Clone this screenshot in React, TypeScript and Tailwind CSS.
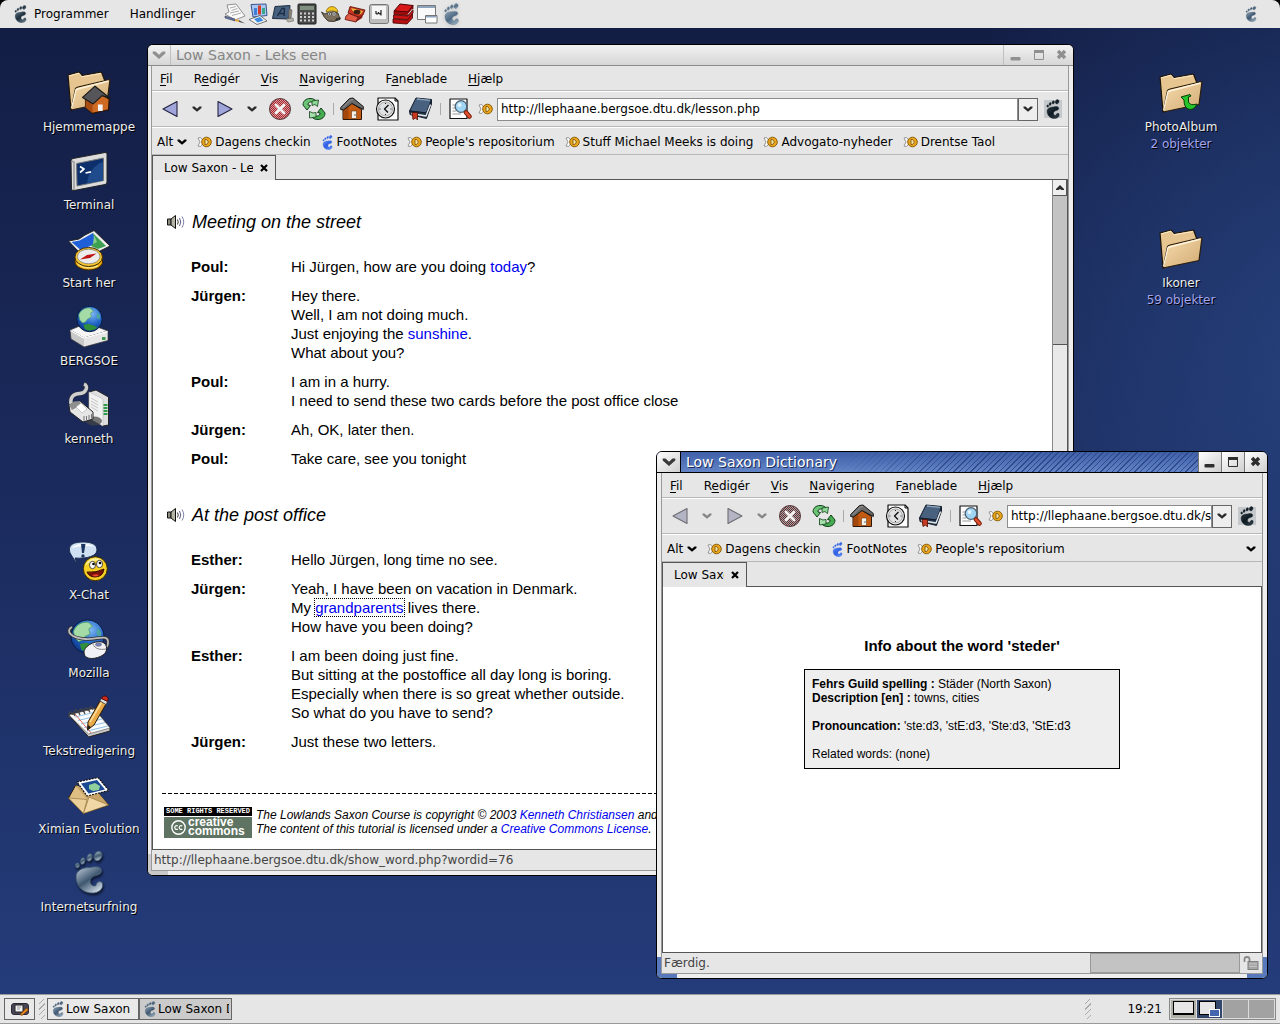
import React, { useId } from "react";
import type { ReactNode } from "react";

type IconProps = { className?: string };

/* ---------- shared drawings ---------- */

function Foot({ className, light = "#b4c6d4", dark = "#1f3a58" }: IconProps & { light?: string; dark?: string }) {
  const id = useId();
  return (
    <svg viewBox="0 0 30 44" className={className} aria-hidden="true">
      <defs>
        <linearGradient id={id} x1="0" y1="0" x2="0.7" y2="1">
          <stop offset="0" stopColor={light} />
          <stop offset="0.55" stopColor={dark} />
          <stop offset="1" stopColor={light} />
        </linearGradient>
      </defs>
      <g fill={`url(#${id})`} stroke={dark} strokeWidth="0.8">
        <ellipse cx="24" cy="6" rx="3.8" ry="5" transform="rotate(25 24 6)" />
        <ellipse cx="15.5" cy="7.5" rx="2.5" ry="3.8" transform="rotate(18 15.5 7.5)" />
        <ellipse cx="8.7" cy="11" rx="2.2" ry="3.3" transform="rotate(14 8.7 11)" />
        <ellipse cx="3.4" cy="15.4" rx="2" ry="2.5" transform="rotate(10 3.4 15.4)" />
        <path d="M2 27C2 20 9 17.500 16 17.500C23 16 28 16.500 27.500 21.500C26.500 26.500 18.500 24.500 16.500 29.500C15 34.500 19.500 37 22 35.500C22 32 26 30.500 28 32.500C30 37 27 42 20 43C9 44 2 36 2 27Z" />
      </g>
    </svg>
  );
}

function Chevron({ className }: IconProps) {
  return (
    <svg viewBox="0 0 10 8" className={className ?? "h-2 w-2.5"} aria-hidden="true">
      <path d="M0.500 1.500H2.500L5 3.800L7.500 1.500H9.500V3L5 6.800L0.500 3Z" fill="currentColor" />
    </svg>
  );
}

function House() {
  return (
    <g strokeLinejoin="round">
      <path d="M3 11L11.500 6L21.500 12.500V22.500H3Z" fill="#c25a12" stroke="#2a1608" />
      <path d="M3.500 11.500L8.500 8.500V22H3.500Z" fill="#a3470b" />
      <path d="M0.700 10.500L9.500 1.500L13 1L23.300 9.500V12.500L12 6.500L3.500 13L0.700 12.500Z" fill="#6a6a6a" stroke="#161616" />
      <path d="M3 10.500L10.500 3L13 2.500" fill="none" stroke="#9a9a9a" />
      <rect x="11.500" y="14" width="5" height="7.500" fill="#f4f1ea" stroke="#6a3a10" strokeWidth="0.600" />
      <circle cx="15" cy="18" r="0.700" fill="#333" />
    </g>
  );
}

function Folder({ dy = 0, children }: { dy?: number; children?: ReactNode }) {
  const id = useId();
  return (
    <svg viewBox="0 0 44 44" className="size-11 overflow-visible" aria-hidden="true">
      <defs>
        <linearGradient id={id} x1="0" y1="0" x2="1" y2="1">
          <stop offset="0" stopColor="#f6dcae" />
          <stop offset="1" stopColor="#d2aa72" />
        </linearGradient>
      </defs>
      <g transform={`translate(0 ${dy})`} strokeLinejoin="round">
        <path d="M1 4L12 1L15 4.500L34.500 1L37.500 9L38 20L4 39Z" fill="#e6c590" stroke="#1c1408" strokeWidth="1.2" />
        <path d="M2 5L12 2.200L15 5.800L34 2.500" fill="none" stroke="#fbe9c6" />
        <path d="M8.500 17.500Q9 16.500 11 16L43 8.500L40 31.500L4 39Z" fill={`url(#${id})`} stroke="#2a1d0b" strokeWidth="1.2" />
        <path d="M4.500 37.500L9 18.500L41.500 10" fill="none" stroke="#fff4dc" strokeWidth="1.3" />
        {children}
      </g>
    </svg>
  );
}

function Globe({ cx, cy, r }: { cx: number; cy: number; r: number }) {
  const id = useId();
  return (
    <g>
      <defs>
        <radialGradient id={id} cx="0.6" cy="0.3" r="0.8">
          <stop offset="0" stopColor="#7fb8f4" />
          <stop offset="0.5" stopColor="#2166c8" />
          <stop offset="1" stopColor="#0a2c7a" />
        </radialGradient>
      </defs>
      <circle cx={cx} cy={cy} r={r} fill={`url(#${id})`} stroke="#081a40" />
      <g transform={`translate(${cx} ${cy}) scale(${r / 13})`}>
        <path d="M-11 -4C-9 -10 -3 -12 1 -11L4 -8L1 -6L2 -2L-2 0L-4 3L-7 4L-10 1Z" fill="#a5dba6" stroke="#4f9e62" strokeWidth="0.6" />
        <path d="M-6 6L-1 5L5 7L8 9C4 12 -2 13 -5 10Z" fill="#2f8f3a" />
        <path d="M8 -7L11 -3L10 1L7 -2Z" fill="#4ea5a0" />
      </g>
    </g>
  );
}

/* ---------- desktop icons ---------- */

function Pic({ children }: { children: ReactNode }) {
  return (
    <svg viewBox="0 0 44 44" className="size-11 overflow-visible" aria-hidden="true" strokeLinejoin="round">
      {children}
    </svg>
  );
}

const HomeFolder = () => (
  <Folder>
    <g transform="translate(15 14) scale(1.18)">
      <path d="M3 11L12 4L23 12L22.500 21L9 24L3 19Z" fill="#cf6a22" stroke="#2c1404" />
      <path d="M3 11L9 14V24L3 19Z" fill="#a94c12" />
      <path d="M0.500 10.500L11 1L24 11.500L17 9L9.500 16Z" fill="#56565a" stroke="#1a1a1a" />
      <rect x="13.500" y="16.500" width="4" height="5.500" fill="#f4f4f4" />
    </g>
  </Folder>
);

const Terminal = () => (
  <Pic>
    <path d="M4 12Q4 10 6 9.500L38 3.500Q40 3 40 5V33Q40 35 38 35.500L7 41.500Q5 42 4.500 40Z" fill="#dcdcdc" stroke="#222" />
    <path d="M4.500 12L7 13V41" fill="none" stroke="#9a9a9a" strokeWidth="1.500" />
    <path d="M9.500 14.500L36.500 9V31.500L10 37Z" fill="#0d2f6b" stroke="#777" />
    <path d="M20 34.500C21 24 27 16 36 13V31.500Z" fill="#1f4a8c" />
    <path d="M13 17.500L17 20L13 23.500" fill="none" stroke="#fff" strokeWidth="1.700" />
    <path d="M18.500 24L24 22.800" stroke="#fff" strokeWidth="1.700" />
  </Pic>
);

const StartHere = () => (
  <Pic>
    <path d="M1.500 14L12 12L18 8L27 3.500L43 19L31 25L22 22L12 25Z" fill="#eee" stroke="#222" />
    <path d="M4.500 15L12.500 13.500L19 10L26 6L30 16L21 20L13 22.500Z" fill="#1f5fd8" />
    <path d="M26 6L39 19L31 22L24 19L28 14Z" fill="#3ea152" />
    <path d="M27 8L30 15L26 17Z" fill="#88cc8c" />
    <path d="M8 30V35C8 39 14 43 21.700 43S35.500 39 35.500 35V30Z" fill="#e9a80e" stroke="#3a2602" />
    <path d="M11 37C17 41.500 26 41.500 31 38.500" stroke="#fbe27a" strokeWidth="1.800" fill="none" />
    <ellipse cx="21.700" cy="30" rx="13.800" ry="9.500" fill="#f4c630" stroke="#3a2602" />
    <ellipse cx="21.700" cy="29.500" rx="11.300" ry="7.300" fill="#ececec" stroke="#777" strokeWidth="0.700" />
    <path d="M13 32.500L20 28L29.500 26.500L23 31Z" fill="#c01414" />
  </Pic>
);

const Bergsoe = () => (
  <Pic>
    <path d="M3 25L20 18L41 26L17 33Z" fill="#f6f6f6" stroke="#333" strokeWidth="0.700" />
    <path d="M3 25L17 33V42L4 34Z" fill="#c9c9c9" />
    <path d="M17 33L41 26V35.500L17 42Z" fill="#e6e6e6" />
    <path d="M3 25L17 33L41 26V35.500L17 42L4 34Z" fill="none" stroke="#333" strokeWidth="0.700" />
    <path d="M3.500 25.500L17 33.200L40.500 26.500" fill="none" stroke="#fff" strokeWidth="1.400" />
    <rect x="35" y="32" width="3.500" height="3" fill="#3a9a50" />
    <Globe cx={22.500} cy={14} r={12.700} />
  </Pic>
);

const Kenneth = () => (
  <Pic>
    <path d="M17 1C22 3 19 10 13 10.500C6 11 3 14 4 21" fill="none" stroke="#333" strokeWidth="4.600" />
    <path d="M17 1C22 3 19 10 13 10.500C6 11 3 14 4 21" fill="none" stroke="#cfcfcf" strokeWidth="3.400" />
    <path d="M22 9L29 7L41.500 14V42L36 43L22 35Z" fill="#dedede" stroke="#222" />
    <path d="M22 9L36 16V43L22 35Z" fill="#f1f1f1" stroke="#bbb" strokeWidth="0.600" />
    <path d="M24 15L31 19M24 18L31 22M24 21L31 25M24 24L31 28" stroke="#bbb" strokeWidth="0.800" />
    <path d="M38.500 21V33" stroke="#2f9a48" strokeWidth="4" strokeDasharray="2 1" />
    <ellipse cx="27" cy="38" rx="8" ry="4.500" fill="#444" opacity="0.700" />
    <path d="M2 22L13 18L26 29V36L16 39L3 29Z" fill="#e6e6e6" stroke="#222" />
    <path d="M2 22L7 18.500L13 18L14 22L5 27Z" fill="#8f8f8f" />
    <path d="M9 24L14 20L20 26L15 30Z" fill="#fff" stroke="#aaa" strokeWidth="0.600" />
    <path d="M17 33V38M19.500 33V37M22 32V36.500M24.500 31V35.500" stroke="#777" />
  </Pic>
);

const XChat = () => (
  <Pic>
    <path d="M8 19L10.500 26L3 14C0 5 8 3 16 3S30 5 30 11S20 20 8 19Z" fill="#cfe0f3" stroke="#1a2c50" />
    <path d="M5 9C8 4 24 4 27 8C22 6 10 7 5 9Z" fill="#fff" />
    <path d="M14 5H18.500L17 14H15Z" fill="#1c3560" />
    <circle cx="16" cy="17" r="1.700" fill="#1c3560" />
    <circle cx="28.300" cy="29.700" r="12" fill="#f6cf24" stroke="#3c2b00" />
    <path d="M18 27A11 11 0 0 1 36 22A16 12 0 0 0 18 27Z" fill="#fdf09a" />
    <ellipse cx="25.500" cy="26" rx="3" ry="3.700" fill="#fff" stroke="#222" strokeWidth="0.800" />
    <ellipse cx="32.500" cy="25" rx="3" ry="3.700" fill="#fff" stroke="#222" strokeWidth="0.800" />
    <circle cx="26.500" cy="25" r="1.300" />
    <circle cx="33" cy="24" r="1.300" />
    <path d="M20 33Q29 34 37 30Q36 38 28 38Q22 38 20 33Z" fill="#7a1008" stroke="#200" strokeWidth="0.800" />
    <path d="M25 36.800Q29 34 32 36.500Q29 38.500 25 36.800Z" fill="#e8442e" />
  </Pic>
);

const Mozilla = () => (
  <Pic>
    <Globe cx={20.500} cy={19.500} r={16.500} />
    <path d="M5 10C-2 14 4 21 18 22C30 23 42 16 41 26C41 29 39 31 37 31" fill="none" stroke="#333" strokeWidth="3.400" />
    <path d="M5 10C-2 14 4 21 18 22C30 23 42 16 41 26C41 29 39 31 37 31" fill="none" stroke="#bdbdbd" strokeWidth="1.800" />
    <path d="M17 36C16 30 27 23 35 25C41 27 41 35 36 38C30 42 18 44 17 36Z" fill="#f2f2f6" stroke="#222" />
    <path d="M26 27C28 32 33 33 39 32" fill="none" stroke="#888" />
    <ellipse cx="31.500" cy="27.500" rx="3" ry="1.700" fill="#7f86c8" stroke="#444" strokeWidth="0.500" />
  </Pic>
);

const TextEdit = () => (
  <Pic>
    <path d="M1.500 20L27 13L43 33V36L21.500 42L20 40Z" fill="#c9c9c9" stroke="#222" />
    <path d="M2 20L27 13.500L43 33L21.500 39Z" fill="#fbfbfb" stroke="#555" strokeWidth="0.600" />
    <path d="M8 22L29 17M11 25.500L32 20.500M14 29L35 24M17 32.500L38 27.500M20 36L41 31" stroke="#8cc3ea" />
    <path d="M8 19L24 38" stroke="#e06a5a" />
    <path d="M3 23C0 18 5 14 6 20M8 21C5 16 10 12 11 18M13 20C10 15 15 11 16 17M18 19C15 14 20 10 21 16M23 17.500C20 13 25 9 26 15" fill="none" stroke="#444" strokeWidth="1.300" />
    <path d="M20.500 35L21 27L33 6L39 9L27 30Z" fill="#e9a948" stroke="#2a1a04" />
    <path d="M23 27L34.500 7.500" stroke="#fbdc96" strokeWidth="1.500" />
    <path d="M20.500 35L21 30L24 32Z" fill="#222" />
    <path d="M33 6L34.500 3.500L40.500 6.500L39 9.500Z" fill="#ddd" stroke="#444" strokeWidth="0.700" />
    <path d="M34.500 3.500C36 -1 43 1 40.500 6.500Z" fill="#cf2a1c" stroke="#3a0604" strokeWidth="0.800" />
  </Pic>
);

const Evolution = () => (
  <Pic>
    <path d="M1.500 25L8.500 12.500L28 16L41.500 32L16.500 40.500Z" fill="#e0bf85" stroke="#2a1d0a" />
    <path d="M8.500 12.500L28 16L41.500 32L20 26Z" fill="#c8a566" />
    <path d="M1.500 25L20 26.500L16.500 40.500Z" fill="#ecd09a" stroke="#8c6b34" strokeWidth="0.600" />
    <path d="M16.500 40.500L22 24L41.500 32Z" fill="#f0d7a5" stroke="#8c6b34" strokeWidth="0.600" />
    <path d="M10 9L31 4.500L42 17.500L20 23Z" fill="#fff" stroke="#111" strokeWidth="1.200" strokeDasharray="2 1" />
    <path d="M14 10.500L30 7L38 16.500L21.500 20.500Z" fill="#1b4a94" />
    <path d="M22 12L28 10L33 13L32 17L26 18L22 16Z" fill="#8fd09c" />
  </Pic>
);

const FootBig = () => (
  <span className="flex size-11 justify-center drop-shadow-[1px_2px_1px_rgba(0,0,0,0.6)]">
    <Foot className="-mt-px h-11 w-[30px]" light="#c5d2df" dark="#3f5870" />
  </span>
);

/* ---------- panel launchers (22 x 22) ---------- */

function Small({ children, className }: { children: ReactNode; className?: string }) {
  return (
    <svg viewBox="0 0 22 22" className={className ?? "size-[22px]"} aria-hidden="true" strokeLinejoin="round">
      {children}
    </svg>
  );
}

const launchers: { name: string; icon: ReactNode }[] = [
  {
    name: "Writer",
    icon: (
      <Small>
        <path d="M3 2L12 1L21 13L11 17L1 11L5 9Z" fill="#fafafa" stroke="#777" strokeWidth="0.800" />
        <path d="M6 5L12 3.500M7.500 7.500L13.500 5.500M6 10L15 8M8 12.500L17 10" stroke="#999" strokeWidth="0.800" />
        <path d="M1 13L11 16V18L1 15Z" fill="#5d74b0" stroke="#333" strokeWidth="0.500" />
        <path d="M11 16L15 17V19L11 18Z" fill="#e0a43c" />
        <path d="M15 17L21 20.500L15 19Z" fill="#555" />
      </Small>
    ),
  },
  {
    name: "Impress",
    icon: (
      <Small>
        <path d="M3 1.500L18 1L19 12.500L5 14Z" fill="#a9c6f0" stroke="#35558e" />
        <rect x="6" y="5" width="3" height="7" fill="#3f7fd8" />
        <rect x="10" y="2.500" width="3" height="9" fill="#d63a2c" />
        <rect x="14" y="5" width="3" height="6" fill="#3aa88a" />
        <path d="M1 16.500L12 12.500L19 18L9 21.500Z" fill="#f4f4f4" stroke="#555" strokeWidth="0.800" />
        <path d="M6 16L12 14L15.500 17.500L9.500 19.500Z" fill="#3b8be0" />
      </Small>
    ),
  },
  {
    name: "Draw",
    icon: (
      <Small>
        <path d="M3 3.500L18 2.500L17 16L0.500 15.500Z" fill="#46607f" stroke="#1e2c40" />
        <path d="M5.500 13L10 5.500H12.500L12 13M7.500 10.500H12" fill="none" stroke="#1b2b44" strokeWidth="1.300" />
        <path d="M17 6L20 7L19 15L16.500 15Z" fill="#8b8375" stroke="#555" strokeWidth="0.600" />
        <path d="M14 16L21 15L21.500 18L16 19Z" fill="#b8b3a8" stroke="#666" strokeWidth="0.600" />
      </Small>
    ),
  },
  {
    name: "Calculator",
    icon: (
      <Small>
        <rect x="2" y="1" width="18" height="20" rx="1" fill="#4a4a4a" stroke="#1c1c1c" />
        <rect x="4" y="3" width="14" height="4" fill="#7f8f80" />
        <path d="M4 10.500H18M4 14H18M4 17.500H18" stroke="#cfcfcf" strokeWidth="2" strokeDasharray="2 2" />
      </Small>
    ),
  },
  {
    name: "GIMP",
    icon: (
      <Small>
        <path d="M1.500 9L5 11Q12 7 18 10L20 16Q14 20 8 18Q4 15 1.500 9Z" fill="#7d715e" stroke="#2c241a" strokeWidth="0.800" />
        <path d="M6 9Q7 4 12 3.500Q17 4 18 9Q12 6.500 6 9Z" fill="#f2c51c" stroke="#7a5a00" strokeWidth="0.700" />
        <circle cx="9.500" cy="11" r="1.700" fill="#fff" stroke="#222" strokeWidth="0.500" />
        <circle cx="14" cy="11" r="1.900" fill="#fff" stroke="#222" strokeWidth="0.500" />
        <circle cx="9.500" cy="11" r="0.700" />
        <circle cx="14" cy="11" r="0.800" />
        <path d="M16 15L21 14.500L20 17L15 18Z" fill="#333" />
      </Small>
    ),
  },
  {
    name: "Eye of GNOME",
    icon: (
      <Small>
        <path d="M6 3.500L21 7L19 12L14 14L4 10Z" fill="#c8321e" stroke="#5a0c08" strokeWidth="0.800" />
        <path d="M7 5L19 8L17 11Q10 12 7 5Z" fill="#e7b63c" />
        <ellipse cx="13" cy="9" rx="3.500" ry="2.300" fill="#3a2010" />
        <path d="M2 13L5 10.500L14 14L12 19L1 16.500Z" fill="#e05a44" stroke="#5a0c08" strokeWidth="0.800" />
        <path d="M14 14L19 12L18 15L12 19Z" fill="#8a1a12" />
      </Small>
    ),
  },
  {
    name: "Keyboard",
    icon: (
      <Small>
        <rect x="1.500" y="1.500" width="19" height="19" rx="2" fill="#bdbdbd" stroke="#777" />
        <rect x="3.500" y="2.500" width="15" height="14" rx="1" fill="#f6f6f6" stroke="#aaa" strokeWidth="0.600" />
        <path d="M8 8V10.500Q10 12 10.500 9M10.500 9Q11 12 13 10V7M13 10V12.500" fill="none" stroke="#222" strokeWidth="1.200" />
      </Small>
    ),
  },
  {
    name: "Dictionary",
    icon: (
      <Small>
        <path d="M8 1L21 2.500L16 9L2 8Z" fill="#d81818" stroke="#4a0404" />
        <path d="M2 8L16 9L21 2.500V6L16 12.500L2 11.500Z" fill="#a00c0c" stroke="#4a0404" strokeWidth="0.700" />
        <path d="M1.500 12L16 13L21 7V10L16 16.500L1.500 15.500Z" fill="#d01414" stroke="#4a0404" strokeWidth="0.800" />
        <path d="M1 16L15 17L20.500 11V15L15 21L1 20Z" fill="#b81010" stroke="#4a0404" strokeWidth="0.800" />
        <path d="M16 11.500L20.500 6" stroke="#ddd" fill="none" />
      </Small>
    ),
  },
  {
    name: "Windows",
    icon: (
      <Small>
        <rect x="1.500" y="2.500" width="18" height="14" fill="#fafafa" stroke="#777" />
        <rect x="2" y="3" width="17" height="2" fill="#8da3bd" />
        <rect x="9.500" y="12.500" width="11.500" height="7.500" fill="#fff" stroke="#777" />
        <rect x="10" y="13" width="10.500" height="1.500" fill="#8da3bd" />
      </Small>
    ),
  },
  { name: "Epiphany", icon: <Foot className="h-[22px] w-[15px] drop-shadow-sm" light="#8fa6ba" dark="#4f6a84" /> },
];

/* ---------- toolbar icons ---------- */

function Tool({ children, size }: { children: ReactNode; size?: string }) {
  return (
    <svg viewBox="0 0 24 24" className={size ?? "size-6"} aria-hidden="true" strokeLinejoin="round">
      {children}
    </svg>
  );
}

const Arrow = ({ right, dim }: { right?: boolean; dim?: boolean }) => (
  <Tool>
    <path
      d={right ? "M5 4.500V19.500L19 12Z" : "M19 4.500V19.500L5 12Z"}
      fill={dim ? "#b3b5c4" : "#a0a5da"}
      stroke={dim ? "#6d6d72" : "#23233f"}
      strokeWidth="1.100"
    />
  </Tool>
);

const StopIcon = ({ dim }: { dim?: boolean }) => {
  const id = useId();
  return (
    <Tool>
      <defs>
        <pattern id={id} width="2" height="2" patternUnits="userSpaceOnUse">
          <rect width="2" height="2" fill={dim ? "#b0a2a2" : "#d69c9c"} />
          <rect width="1" height="1" fill={dim ? "#6a2e32" : "#b32430"} />
          <rect x="1" y="1" width="1" height="1" fill={dim ? "#4c3438" : "#a02430"} />
        </pattern>
      </defs>
      <circle cx="12" cy="12" r="10.500" fill={`url(#${id})`} stroke="#5a3a3c" strokeWidth="1" />
      <path d="M8 8L16 16M16 8L8 16" stroke="#f4f1f1" strokeWidth="2.800" strokeLinecap="round" />
    </Tool>
  );
};

const ReloadIcon = () => (
  <Tool>
    <path
      d="M1 8C1 4 4 1.500 8 1.500C12 1.500 14 3 15 5.500L12.500 7C11.500 5.500 10 4.800 8.500 5C6.500 5.300 5.800 6.500 6 8L8.500 8.500L5 13L1 8Z"
      fill="#6cc476"
      stroke="#123f1a"
    />
    <path d="M10 4L16.500 3L15.500 9.500L12.800 7.500L10 8.500Z" fill="#8ed896" stroke="#123f1a" strokeWidth="0.800" />
    <path
      d="M23 16C23 20 20 22.500 16 22.500C12 22.500 10 21 9 18.500L11.500 17C12.500 18.500 14 19.200 15.500 19C17.500 18.700 18.200 17.500 18 16L15.500 15.500L19 11L23 16Z"
      fill="#45ac52"
      stroke="#123f1a"
    />
    <path d="M14 20L7.500 21L7.500 14.500L11 16L14 15.500Z" fill="#a5dfa9" stroke="#123f1a" strokeWidth="0.800" />
  </Tool>
);

const HistoryIcon = () => (
  <Tool>
    <path d="M3 1H20L23 4V23H3Z" fill="#fdfdfd" stroke="#111" strokeWidth="1.200" />
    <path d="M20 1V4H23" fill="none" stroke="#111" />
    <circle cx="10.500" cy="12" r="9" fill="#f2f2f2" stroke="#111" strokeWidth="1.200" />
    <circle cx="10.500" cy="12" r="7" fill="#dfe1e3" stroke="#888" strokeWidth="0.700" />
    <path d="M10.500 6V7M10.500 17V18M4.500 12H5.500M15.500 12H16.500" stroke="#222" />
    <path d="M13.500 8L9.500 12L13 15.500" fill="none" stroke="#111" strokeWidth="1.400" />
  </Tool>
);

const BookIcon = () => (
  <Tool>
    <path d="M8 1L23.500 2.500L18.500 16L1.500 14Z" fill="#47617f" stroke="#0f1a28" />
    <path d="M1.500 14L18.500 16L23.500 3V7L18.500 21.500L2 17.500Z" fill="#26384e" stroke="#0f1a28" strokeWidth="0.900" />
    <path d="M3 16.500L18 19L22.500 7.500" fill="none" stroke="#e4e7ea" strokeWidth="1.400" />
    <path d="M9 2L22 3.300" stroke="#8ba3bd" strokeWidth="1.300" />
    <path d="M4 15.500H9.500V23L7.500 21L5 22.500Z" fill="#c63a22" stroke="#4c0e04" strokeWidth="0.800" />
  </Tool>
);

const FindIcon = () => (
  <Tool>
    <rect x="2" y="2" width="17" height="19.500" fill="#fdfdfd" stroke="#111" strokeWidth="1.200" />
    <path d="M4.500 8H8M4.500 11H8M4.500 14H8M4.500 17H13" stroke="#999" />
    <circle cx="13" cy="9.500" r="5.800" fill="#9fd4f2" stroke="#4c6272" strokeWidth="1.300" />
    <circle cx="11.500" cy="8" r="2" fill="#e4f5fd" />
    <path d="M18 15.500L21.500 19.500" stroke="#7c1f0c" strokeWidth="4.500" strokeLinecap="round" />
    <path d="M18 15.500L21.500 19.500" stroke="#e2502c" strokeWidth="2.600" strokeLinecap="round" />
  </Tool>
);

const FishIcon = () => (
  <svg viewBox="0 0 15 12" className="h-3 w-[15px] shrink-0" aria-hidden="true">
    <path d="M1 2L3.500 1.500L6 4.500V7.500L3.500 10.500L1 10L3 6Z" fill="#fff" stroke="#8a8a8a" strokeWidth="0.900" />
    <circle cx="9.500" cy="6" r="4.800" fill="#eba51c" stroke="#8a5f0a" strokeWidth="1" />
    <path d="M8 3.500H9.500L11.500 6L9.500 8.500H8Z" fill="#fbe6a6" stroke="#6b4d0c" strokeWidth="0.800" />
  </svg>
);

const Speaker = () => (
  <svg viewBox="0 0 20 16" className="h-4 w-5 shrink-0" aria-hidden="true">
    <path d="M1.500 5H5V11H1.500Z" fill="#8d8d80" stroke="#111" />
    <path d="M5 5L9.500 1.500V14.500L5 11Z" fill="#b4b4a4" stroke="#111" />
    <path d="M11.500 5.500Q13 8 11.500 10.500" fill="none" stroke="#333" />
    <path d="M13.500 4Q16 8 13.500 12" fill="none" stroke="#5a5a86" />
    <path d="M16 2.500Q19.500 8 16 13.500" fill="none" stroke="#8080a8" />
  </svg>
);

/* ---------- window parts ---------- */

const MinGlyph = () => (
  <svg viewBox="0 0 12 12" className="size-3" aria-hidden="true">
    <rect x="0.500" y="8" width="10" height="3.500" rx="1" fill="currentColor" />
  </svg>
);
const MaxGlyph = () => (
  <svg viewBox="0 0 12 12" className="size-3" aria-hidden="true">
    <path d="M1.500 2V10.500H10.500V2" fill="none" stroke="currentColor" />
    <rect x="1" y="1" width="10" height="3" fill="currentColor" />
  </svg>
);
const CloseGlyph = () => (
  <svg viewBox="0 0 12 12" className="size-3" aria-hidden="true">
    <path d="M2 2L9 9M9 2L2 9" stroke="currentColor" strokeWidth="3.400" />
  </svg>
);

const menus: [string, string, string][] = [
  ["", "F", "il"],
  ["R", "e", "digér"],
  ["", "V", "is"],
  ["", "N", "avigering"],
  ["F", "a", "neblade"],
  ["", "H", "jælp"],
];

type WindowProps = {
  title: string;
  active?: boolean;
  place: string;
  url: string;
  tab: string;
  tabWidth: string;
  bookmarks: string[];
  overflow?: boolean;
  status: ReactNode;
  children: ReactNode;
};

function BrowserWindow({ title, active, place, url, tab, tabWidth, bookmarks, overflow, status, children }: WindowProps) {
  const control = active
    ? "flex w-[23px] items-center justify-center border-l border-[#777] bg-linear-to-br from-white to-[#cfcfcf] text-[#2e2e2e]"
    : "flex w-[23px] items-center justify-center text-[#909090]";
  const corner = active ? "absolute bottom-0 h-[21px] w-5 bg-[#5878bd]" : "absolute bottom-0 h-[21px] w-5 bg-[#c9c9c9]";
  return (
    <section aria-label={title} className={`absolute flex flex-col overflow-hidden rounded-md border border-black bg-[#eeeeee] ${place}`}>
      <header
        className={
          active
            ? "flex h-[21px] shrink-0 border-b border-black bg-linear-to-b from-[#3f5fa8] to-[#6384c6]"
            : "flex h-[21px] shrink-0 border-b border-[#8c8c8c] bg-linear-to-b from-[#f2f2f2] to-[#d6d6d6]"
        }
      >
        <button
          aria-label="Vinduesmenu"
          className={
            active
              ? "flex w-6 items-center justify-center border-r border-black bg-linear-to-br from-white to-[#cfcfcf] text-[#3a3a3a]"
              : "flex w-[23px] items-center justify-center border-r border-[#c0c0c0] text-[#909090]"
          }
        >
          <Chevron className="h-3 w-3.5" />
        </button>
        <h2
          className={
            active
              ? "pl-[5px] text-[14px] leading-5 text-white [text-shadow:1px_1px_0_#1c2c58]"
              : "pl-[5px] text-[14px] leading-5 text-[#858585]"
          }
        >
          {title}
        </h2>
        <div
          className={
            active
              ? "flex-1 bg-[repeating-linear-gradient(135deg,#2f4a8c_0_1px,transparent_1px_4px)] [mask-image:linear-gradient(to_right,transparent,black_35%)]"
              : "flex-1 border-r border-[#c0c0c0]"
          }
        />
        <button aria-label="Minimér" className={control}><MinGlyph /></button>
        <button aria-label="Maksimér" className={control}><MaxGlyph /></button>
        <button aria-label="Luk" className={control}><CloseGlyph /></button>
      </header>

      <div className={active ? "relative flex flex-1 flex-col px-1 pb-1" : "relative flex flex-1 flex-col pr-1 pb-1 pl-[3px]"}>
        <span className={`${corner} left-0`} />
        <span className={`${corner} right-0`} />
        <div className="relative flex flex-1 flex-col border-x border-b border-[#999] bg-[#e6e6e6]">
          <nav aria-label="Menulinje" className="flex h-[25px] items-center gap-[21px] border-b border-[#b8b8b8] pt-0.5 pl-2">
            {menus.map(([a, b, c]) => (
              <button key={a + b + c}>
                {a}
                <span className="underline underline-offset-2">{b}</span>
                {c}
              </button>
            ))}
          </nav>

          <div className="flex h-9 items-center border-t border-b border-t-white border-b-[#b8b8b8] pl-0.5 text-[#2a2a2a]">
            <button aria-label="Tilbage" disabled={active} className="flex w-8 justify-center"><Arrow dim={active} /></button>
            <button aria-label="Tilbage-historik" className={active ? "flex w-[22px] justify-center text-[#858585]" : "flex w-[22px] justify-center"}><Chevron /></button>
            <button aria-label="Fremad" disabled={active} className="flex w-[34px] justify-center"><Arrow right dim={active} /></button>
            <button aria-label="Fremad-historik" className={active ? "flex w-5 justify-center text-[#858585]" : "flex w-5 justify-center"}><Chevron /></button>
            <button aria-label="Stop" disabled className="flex w-9 justify-center"><StopIcon dim={active} /></button>
            <button aria-label="Genindlæs" className="flex w-8 justify-center"><ReloadIcon /></button>
            <span className="flex w-1.5 justify-center"><span className="h-3 w-px bg-[#aaa]" /></span>
            <button aria-label="Hjem" className="flex w-8 justify-center"><Tool><House /></Tool></button>
            <button aria-label="Historik" className="flex w-[38px] justify-center"><HistoryIcon /></button>
            <button aria-label="Bogmærker" className="flex w-7 justify-center"><BookIcon /></button>
            <span className="flex w-3 justify-center"><span className="h-3 w-px bg-[#aaa]" /></span>
            <button aria-label="Søg" className="flex w-7 justify-center"><FindIcon /></button>
            <span className="flex w-[23px] justify-center"><FishIcon /></span>
            <input
              aria-label="Adresse"
              defaultValue={url}
              className="h-[23px] min-w-0 flex-1 border border-[#8c8c8c] bg-white pl-[3px] text-black outline-none"
            />
            <button aria-label="Vis adresser" className="flex h-[23px] w-5 items-center justify-center border border-[#666] bg-[#eee]"><Chevron /></button>
            <span className="flex w-[30px] shrink-0 justify-center">
              <span className="flex size-[18px] items-center justify-center bg-[#c6c9cb]">
                <Foot className="h-5 w-4 shrink-0" light="#2b3942" dark="#0e1a22" />
              </span>
            </span>
          </div>

          <div className="flex h-7 items-center gap-2.5 border-t border-b border-t-white border-b-[#b8b8b8] pt-0.5 pl-[5px] whitespace-nowrap">
            <button className="flex items-center gap-1">Alt <Chevron /></button>
            {bookmarks.map((b) => (
              <a key={b} href="#" className="flex items-center gap-[3px]">
                {b === "FootNotes" ? <Foot className="h-[15px] w-[13px] shrink-0" light="#5b8bff" dark="#2f5fe0" /> : <FishIcon />}
                {b}
              </a>
            ))}
            {overflow && <button aria-label="Flere bogmærker" className="mr-1.5 ml-auto"><Chevron /></button>}
          </div>

          <div className="flex h-[25px] border-b border-[#555]">
            <div className={`-mb-px flex h-[25px] items-center gap-[7px] border-t border-r border-l border-[#555] bg-[#e6e6e6] pr-[7px] pl-[11px] ${tabWidth}`}>
              <span className="min-w-0 flex-1 overflow-hidden whitespace-nowrap">{tab}</span>
              <button aria-label="Luk faneblad" className="text-black">
                <svg viewBox="0 0 8 8" className="size-2" aria-hidden="true">
                  <path d="M1 1L7 7M7 1L1 7" stroke="currentColor" strokeWidth="2.200" />
                </svg>
              </button>
            </div>
          </div>

          <div className="flex flex-1 border-x border-b border-[#555] bg-white font-['Liberation_Sans',Arial,sans-serif] text-black">
            {children}
          </div>
          <footer className="flex h-5 items-center text-[#444]">{status}</footer>
        </div>
      </div>
    </section>
  );
}

/* ---------- lesson page ---------- */

const Word = ({ children, focus }: { children: ReactNode; focus?: boolean }) => (
  <a href="#" className={focus ? "text-[#0000ee] outline-1 outline-black outline-dotted" : "text-[#0000ee]"}>
    {children}
  </a>
);

type Line = { who: string; says: ReactNode[] };

const street: Line[] = [
  { who: "Poul:", says: [<>Hi Jürgen, how are you doing <Word>today</Word>?</>] },
  {
    who: "Jürgen:",
    says: ["Hey there.", "Well, I am not doing much.", <>Just enjoying the <Word>sunshine</Word>.</>, "What about you?"],
  },
  { who: "Poul:", says: ["I am in a hurry.", "I need to send these two cards before the post office close"] },
  { who: "Jürgen:", says: ["Ah, OK, later then."] },
  { who: "Poul:", says: ["Take care, see you tonight"] },
];

const office: Line[] = [
  { who: "Esther:", says: ["Hello Jürgen, long time no see."] },
  {
    who: "Jürgen:",
    says: ["Yeah, I have been on vacation in Denmark.", <>My <Word focus>grandparents</Word> lives there.</>, "How have you been doing?"],
  },
  {
    who: "Esther:",
    says: [
      "I am been doing just fine.",
      "But sitting at the postoffice all day long is boring.",
      "Especially when there is so great whether outside.",
      "So what do you have to send?",
    ],
  },
  { who: "Jürgen:", says: ["Just these two letters."] },
];

function Dialogue({ title, lines }: { title: string; lines: Line[] }) {
  return (
    <section>
      <h3 className="flex items-center gap-1.5 pl-[13px] text-[18px] leading-[22px] italic">
        <Speaker />
        {title}
      </h3>
      <dl className="mt-6 grid grid-cols-[100px_1fr] gap-y-2.5 pl-[38px] text-[15px] leading-[19px]">
        {lines.map((l, i) => (
          <React.Fragment key={i}>
            <dt className="font-bold">{l.who}</dt>
            <dd>
              {l.says.map((s, j) => (
                <p key={j}>{s}</p>
              ))}
            </dd>
          </React.Fragment>
        ))}
      </dl>
    </section>
  );
}

function CcBadge() {
  return (
    <a href="#" className="flex h-[31px] w-[88px] shrink-0 flex-col bg-[#5e7361] font-bold text-white not-italic">
      <span className="h-[9px] bg-black text-center font-['Liberation_Mono',monospace] text-[7px] leading-[9px] whitespace-nowrap">
        SOME RIGHTS RESERVED
      </span>
      <span className="flex flex-1 items-center gap-0.5 border-t border-white pl-[7px] text-[12px] leading-[9px]">
        <svg viewBox="0 0 15 15" className="size-[15px] shrink-0" aria-hidden="true" fill="none" stroke="#fff">
          <circle cx="7.500" cy="7.500" r="6.700" strokeWidth="1.400" />
          <path d="M6.800 6A1.900 1.900 0 1 0 6.800 9M11.300 6A1.900 1.900 0 1 0 11.300 9" strokeWidth="1.200" />
        </svg>
        <span className="flex flex-col pb-px">
          <span className="h-[9px]">creative</span>
          <span className="h-[9px]">commons</span>
        </span>
      </span>
    </a>
  );
}

function LessonPage() {
  return (
    <>
      <main className="flex min-w-0 flex-1 flex-col pt-[31px]">
        <div className="flex flex-col gap-9">
          <Dialogue title="Meeting on the street" lines={street} />
          <Dialogue title="At the post office" lines={office} />
        </div>
        <div className="mt-[42px] ml-[9px] h-px bg-[repeating-linear-gradient(to_right,black_0_4px,transparent_4px_6px)]" />
        <div className="mt-[13px] flex gap-1 pb-[11px] pl-[11px] text-[12px] leading-[14px] whitespace-nowrap italic">
          <CcBadge />
          <p className="pt-px">
            The Lowlands Saxon Course is copyright © 2003 <Word>Kenneth Christiansen</Word> and <Word>F</Word>
            <br />
            The content of this tutorial is licensed under a <Word>Creative Commons License</Word>.
          </p>
        </div>
      </main>
      <div className="flex w-[15px] shrink-0 flex-col border-l border-[#888] bg-[#c3c3c3]">
        <button aria-label="Rul op" className="flex h-4 items-center justify-center border-r border-b border-[#555] bg-[#eee] text-[#2a2a2a]">
          <svg viewBox="0 0 8 5" className="h-[5px] w-2" aria-hidden="true">
            <path d="M4 0L8 4V5H5.500L4 4L2.500 5H0V4Z" fill="currentColor" />
          </svg>
        </button>
        <div className="h-[148px]" />
        <div className="flex-1 border-t border-[#555] bg-[#e9e9e9]" />
      </div>
    </>
  );
}

/* ---------- dictionary page ---------- */

function DictionaryPage() {
  return (
    <main className="flex min-h-[365px] flex-1 flex-col items-center pt-[49px]">
      <h3 className="text-[15px] leading-[19px] font-bold">Info about the word 'steder'</h3>
      <div className="mt-3.5 w-[316px] border border-black bg-[#eeeeee] p-[7px] text-[12px] leading-[14px]">
        <p><b>Fehrs Guild spelling :</b> Städer (North Saxon)</p>
        <p><b>Description [en] :</b> towns, cities</p>
        <p className="mt-3.5"><b>Pronouncation:</b> 'ste:d3, 'stE:d3, 'Ste:d3, 'StE:d3</p>
        <p className="mt-3.5">Related words: (none)</p>
      </div>
    </main>
  );
}

/* ---------- desktop ---------- */

function DesktopIcon({ name, note, children }: { name: string; note?: string; children: ReactNode }) {
  return (
    <button className="flex h-[78px] flex-col items-center text-[#eeeeee] [text-shadow:1px_1px_0_#000]">
      {children}
      <span className="mt-1 leading-4 whitespace-nowrap">{name}</span>
      {note && <span className="leading-[18px] whitespace-nowrap text-[#a3a3ee]">{note}</span>}
    </button>
  );
}

const Grip = () => (
  <span className="h-5 w-1.5 bg-[repeating-linear-gradient(135deg,transparent_0_3px,#aaa_3px_4px)]" />
);

function TaskButton({ label, pressed }: { label: string; pressed?: boolean }) {
  return (
    <button
      aria-pressed={!!pressed}
      className={
        pressed
          ? "flex h-[22px] w-[93px] items-center gap-0.5 border border-[#666] bg-[#cbcbcb] pr-0.5 pl-1"
          : "flex h-[22px] w-[92px] items-center gap-0.5 border border-[#666] bg-[#e9e9e9] pr-0.5 pl-1"
      }
    >
      <Foot className="h-4 w-3 shrink-0" light="#8fa6ba" dark="#3f5870" />
      <span className="min-w-0 flex-1 overflow-hidden text-left whitespace-nowrap">{label}</span>
    </button>
  );
}

export default function App() {
  return (
    <div className="flex min-h-screen flex-col overflow-hidden bg-black font-['DejaVu_Sans',Verdana,sans-serif] text-[12px] leading-4 text-black">
      <header className="flex h-7 items-center rounded-t-lg bg-[#e6e6e6]">
        <button className="flex items-center gap-[7px] pl-3.5">
          <Foot className="h-[18px] w-[13px]" light="#5f7384" dark="#1d2f3e" />
          Programmer
        </button>
        <button className="ml-[21px]">Handlinger</button>
        <div className="ml-7 flex">
          {launchers.map((l) => (
            <button key={l.name} aria-label={l.name} className="flex w-6 justify-center">
              {l.icon}
            </button>
          ))}
        </div>
        <button aria-label="Status" className="mr-[23px] ml-auto"><Foot className="h-4 w-3" light="#8fa6ba" dark="#3f5870" /></button>
      </header>

      <div className="relative flex-1 bg-[radial-gradient(circle_at_108%_35%,#27437f_0%,transparent_34%),linear-gradient(to_bottom,#131e45_0%,#1b2b5e_50%,#243c7a_100%)]">
        <div className="absolute top-[43px] left-0 flex w-[178px] flex-col">
          <DesktopIcon name="Hjemmemappe"><HomeFolder /></DesktopIcon>
          <DesktopIcon name="Terminal"><Terminal /></DesktopIcon>
          <DesktopIcon name="Start her"><StartHere /></DesktopIcon>
          <DesktopIcon name="BERGSOE"><Bergsoe /></DesktopIcon>
          <DesktopIcon name="kenneth"><Kenneth /></DesktopIcon>
          <div className="h-[78px]" />
          <DesktopIcon name="X-Chat"><XChat /></DesktopIcon>
          <DesktopIcon name="Mozilla"><Mozilla /></DesktopIcon>
          <DesktopIcon name="Tekstredigering"><TextEdit /></DesktopIcon>
          <DesktopIcon name="Ximian Evolution"><Evolution /></DesktopIcon>
          <DesktopIcon name="Internetsurfning"><FootBig /></DesktopIcon>
        </div>
        <div className="absolute top-[43px] right-0 flex w-[198px] flex-col gap-[78px]">
          <DesktopIcon name="PhotoAlbum" note="2 objekter">
            <Folder dy={2}>
              <path d="M22 24L31 21.500L32 23L29.500 24V29Q31 33 38 31Q35 38 29 36Q25 34 25 27Z" fill="#25c52a" stroke="#063d08" />
            </Folder>
          </DesktopIcon>
          <DesktopIcon name="Ikoner" note="59 objekter"><Folder dy={2} /></DesktopIcon>
        </div>

        <BrowserWindow
          title="Low Saxon - Leks een"
          place="top-4 right-[206px] left-[147px]"
          url="http://llephaane.bergsoe.dtu.dk/lesson.php"
          tab="Low Saxon - Leks een"
          tabWidth="w-[124px]"
          bookmarks={["Dagens checkin", "FootNotes", "People's repositorium", "Stuff Michael Meeks is doing", "Advogato-nyheder", "Drentse Taol"]}
          status={<span className="pl-0.5">http://llephaane.bergsoe.dtu.dk/show_word.php?wordid=76</span>}
        >
          <LessonPage />
        </BrowserWindow>

        <BrowserWindow
          active
          title="Low Saxon Dictionary"
          place="top-[423px] right-3 left-[656px]"
          url="http://llephaane.bergsoe.dtu.dk/s"
          tab="Low Saxon Dictionary"
          tabWidth="w-[85px]"
          bookmarks={["Dagens checkin", "FootNotes", "People's repositorium"]}
          overflow
          status={
            <>
              <span className="flex-1 pl-0.5">Færdig.</span>
              <span className="h-5 w-[150px] border border-[#999] bg-[#c3c3c3]" />
              <svg viewBox="0 0 16 16" className="mx-[3px] size-4" aria-hidden="true">
                <path d="M1.500 7V4Q1.500 2 4 2T6.500 4V7" fill="none" stroke="#888" strokeWidth="1.800" />
                <rect x="5" y="6.500" width="10" height="8" fill="#a5a5a5" stroke="#808080" />
                <path d="M6 9H14M6 11.500H14" stroke="#c5c5c5" />
              </svg>
            </>
          }
        >
          <DictionaryPage />
        </BrowserWindow>
      </div>

      <footer className="flex h-[30px] items-center border-t border-b border-[#999] bg-[#e6e6e6] px-1">
        <button aria-label="Vis skrivebord" className="flex h-[22px] w-[31px] items-center justify-center border border-[#666] bg-[#e9e9e9]">
          <svg viewBox="0 0 18 14" className="h-3.5 w-[18px]" aria-hidden="true">
            <rect x="0.500" y="1.500" width="17" height="11" rx="2.500" fill="#4a4658" stroke="#2a2834" />
            <path d="M4 3H12V10H4Z" fill="#f4f4f4" stroke="#222" />
            <path d="M6 5H10M6 7H9" stroke="#777" strokeWidth="0.700" />
            <path d="M9 12.500L15.500 6L17.500 8L11 13.500Z" fill="#e88a1c" stroke="#5c2c04" strokeWidth="0.600" />
          </svg>
        </button>
        <span className="mr-0.5 ml-1 flex"><Grip /></span>
        <TaskButton label="Low Saxon" />
        <TaskButton label="Low Saxon Dictionary" pressed />
        <span className="ml-auto flex"><Grip /></span>
        <time className="ml-9">19:21</time>
        <div className="ml-[7px] grid h-[22px] w-[107px] grid-cols-4 gap-px border border-[#888] bg-[#dcdcdc] p-px">
          <button aria-label="Arbejdsområde 1" className="flex bg-[#b0b0a8] px-0.5 pt-px pb-[3px]">
            <span className="flex-1 border border-b-2 border-black bg-[#e6e6e6]" />
          </button>
          <button aria-label="Arbejdsområde 2" className="relative flex bg-[#33466b] pt-px pr-1.5 pb-[3px] pl-0.5">
            <span className="flex-1 border border-black bg-[#e6e6e6]" />
            <span className="absolute right-0.5 bottom-px h-2 w-[11px] border border-white bg-[#4565ae]" />
          </button>
          <button aria-label="Arbejdsområde 3" className="bg-[#a2a2a2]" />
          <button aria-label="Arbejdsområde 4" className="bg-[#a2a2a2]" />
        </div>
      </footer>
    </div>
  );
}
